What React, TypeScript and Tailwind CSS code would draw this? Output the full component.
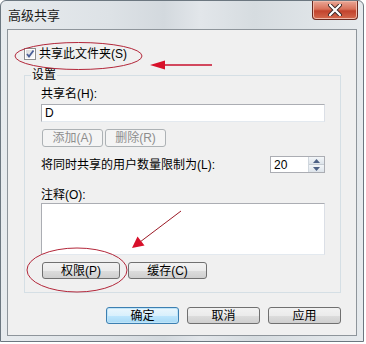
import React from "react";

const font = "font-['Liberation_Sans','Noto_Sans_CJK_SC',sans-serif]";

function WinButton({
  label,
  width,
  disabled,
  primary,
}: {
  label: string;
  width: string;
  disabled?: boolean;
  primary?: boolean;
}) {
  let cls = "border-[#707070] bg-[linear-gradient(to_bottom,#f2f2f2_0%,#ebebeb_50%,#dddddd_51%,#cfcfcf_100%)] text-black";
  if (disabled) cls = "border-[#adb2b5] bg-[#f4f4f4] text-[#8d8d8d]";
  if (primary)
    cls = "border-[#3c7fb1] bg-[linear-gradient(to_bottom,#eaf6fd_0%,#d9f0fc_50%,#bee6fd_51%,#a7d9f5_100%)] text-black shadow-[inset_0_0_0_1px_#bfe4f8]";
  return (
    <div
      className={`${width} flex h-full items-center justify-center rounded-[3px] border text-[12px] leading-none ${cls}`}
    >
      {label}
    </div>
  );
}

function CheckBox() {
  return (
    <svg width="12" height="12" viewBox="0 0 12 12" className="shrink-0">
      <defs>
        <linearGradient id="cbg" x1="0" y1="0" x2="1" y2="1">
          <stop offset="0" stopColor="#d8d8d8" />
          <stop offset="1" stopColor="#ffffff" />
        </linearGradient>
      </defs>
      <rect x="0.5" y="0.5" width="11" height="11" fill="#fff" stroke="#8e8f8f" />
      <rect x="2" y="2" width="8" height="8" fill="url(#cbg)" />
      <path d="M3 6 L5 8.5 L9.5 2.5" fill="none" stroke="#4a5f97" strokeWidth="1.8" />
    </svg>
  );
}

function Spinner() {
  return (
    <div className="flex h-[17px] w-[55px] border border-[#abadb3] bg-white">
      <div className="flex flex-1 items-center pl-[3px] text-[12px] leading-none">20</div>
      <div className="flex w-[16px] flex-col border-l border-[#d0d7de]">
        <div className="flex flex-1 items-center justify-center border-b border-[#c5ccd3] bg-[linear-gradient(to_bottom,#f3f6f9,#dde4ea)]">
          <svg width="7" height="4" viewBox="0 0 7 4">
            <path d="M0 4 L3.5 0 L7 4 Z" fill="#4d6185" />
          </svg>
        </div>
        <div className="flex flex-1 items-center justify-center bg-[linear-gradient(to_bottom,#f3f6f9,#dde4ea)]">
          <svg width="7" height="4" viewBox="0 0 7 4">
            <path d="M0 0 L3.5 4 L7 0 Z" fill="#4d6185" />
          </svg>
        </div>
      </div>
    </div>
  );
}

function CloseButton() {
  return (
    <div className="absolute right-[5px] top-0 flex h-[19px] w-[46px] items-center justify-center rounded-b-[4px] border border-t-0 border-[#6b2a20] bg-[linear-gradient(to_bottom,#e9a796_0%,#d8715a_45%,#c2432d_55%,#d46a4e_100%)] shadow-[inset_0_0_0_1px_#f0b8a8]">
      <svg width="14" height="12" viewBox="0 0 14 12">
        <path d="M2 1 L12 11 M12 1 L2 11" stroke="#3a2a28" strokeWidth="4" strokeLinecap="round" />
        <path d="M2 1 L12 11 M12 1 L2 11" stroke="#ffffff" strokeWidth="2.2" strokeLinecap="round" />
      </svg>
    </div>
  );
}

function Annotations() {
  return (
    <svg
      className="pointer-events-none absolute left-0 top-0"
      width="366"
      height="344"
      viewBox="0 0 366 344"
    >
      <ellipse cx="78.5" cy="56" rx="63.5" ry="13.5" fill="none" stroke="#b3273a" strokeWidth="1" />
      <line x1="212" y1="65" x2="162" y2="65" stroke="#c8102e" strokeWidth="1.5" />
      <path d="M150 65 L165 60.5 L165 69.5 Z" fill="#d8102a" />
      <ellipse cx="77" cy="270" rx="50" ry="22" fill="none" stroke="#b3273a" strokeWidth="1" />
      <line x1="181" y1="211" x2="140" y2="242" stroke="#9c1a26" strokeWidth="1" />
      <path d="M132 248 L137.5 236.5 L144.5 245.5 Z" fill="#d8102a" />
    </svg>
  );
}

export default function App() {
  return (
    <div className={`relative h-[344px] w-[366px] overflow-hidden bg-white ${font}`}>
      <div className="flex h-[342px] w-[364px] flex-col rounded-t-[6px] border border-[#6c7780] bg-[linear-gradient(to_right,#e7ebee_0%,#dde2e6_30%,#d3d9de_45%,#e2e6ea_55%,#d6dce0_70%,#e6eaed_100%)]">
        <div className="relative flex h-[28px] shrink-0 items-center pl-[7px]">
          <span className="text-[13px] leading-none text-[#1b1b1b]">高级共享</span>
          <CloseButton />
        </div>
        <div className="mx-[6px] flex h-[307px] flex-col border border-[#8e959b] bg-[#f0f0f0] pl-[16px] pr-[15px]">
          <div className="mt-[18px] flex h-[12px] items-center gap-[3px]">
            <CheckBox />
            <span className="text-[12px] leading-none">共享此文件夹(S)</span>
          </div>

          <fieldset className="mt-[9px] border border-[#d5dfe5] pb-[13px] pl-[6px] pr-[15px]">
            <legend className="px-[1px] text-[12px] leading-[12px]">设置</legend>
            <div className="flex flex-col pl-[10px]">
              <div className="mt-[7px] h-[12px] text-[12px] leading-[12px]">共享名(H):</div>
              <div className="mt-[4px] flex h-[18px] items-center border border-[#abadb3] border-b-[#e3e9ef] border-r-[#dbdfe6] bg-white pl-[3px] text-[12px] leading-none">
                D
              </div>
              <div className="mt-[7px] flex h-[18px] gap-[2px] pl-[1px]">
                <WinButton label="添加(A)" width="w-[61px]" disabled />
                <WinButton label="删除(R)" width="w-[61px]" disabled />
              </div>
              <div className="mt-[9px] flex h-[17px] items-center justify-between">
                <span className="text-[12px] leading-none">将同时共享的用户数量限制为(L):</span>
                <Spinner />
              </div>
              <div className="mt-[16px] h-[12px] text-[12px] leading-[12px]">注释(O):</div>
              <div className="mt-[2px] h-[52px] border border-[#abadb3] border-b-[#e3e9ef] border-r-[#dbdfe6] bg-white" />
              <div className="mt-[7px] flex h-[17px] gap-[8px] pl-[1px]">
                <WinButton label="权限(P)" width="w-[78px]" />
                <WinButton label="缓存(C)" width="w-[79px]" />
              </div>
            </div>
          </fieldset>

          <div className="mt-[14px] flex h-[17px] justify-end gap-[8px]">
            <WinButton label="确定" width="w-[73px]" primary />
            <WinButton label="取消" width="w-[73px]" />
            <WinButton label="应用" width="w-[73px]" />
          </div>
        </div>
      </div>
      <Annotations />
    </div>
  );
}
